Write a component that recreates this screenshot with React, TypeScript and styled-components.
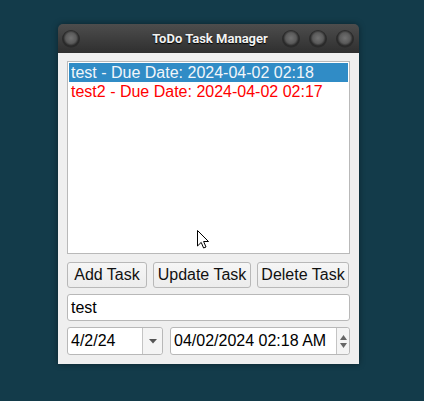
import React from "react";
import styled, { createGlobalStyle } from "styled-components";

const Global = createGlobalStyle`
  html, body { margin: 0; padding: 0; }
  body { background: #133b4a; font-family: "Liberation Sans", Arial, sans-serif; }
`;

const Page = styled.div`
  width: 424px;
  height: 401px;
  position: relative;
  padding: 24px 0 0 58px;
  box-sizing: border-box;
`;

const Window = styled.div`
  width: 301px;
  height: 340px;
  display: flex;
  flex-direction: column;
  border-radius: 5px 5px 0 0;
  overflow: hidden;
  box-shadow: 0 0 6px rgba(0,0,0,0.4);
`;

const TitleBar = styled.div`
  height: 29px;
  flex: none;
  background: linear-gradient(#4d4d4d, #2f2f2f);
  display: flex;
  align-items: center;
  padding: 0 5px 0 4px;
  gap: 9px;
`;

const Knob = styled.div`
  width: 18px;
  height: 18px;
  border-radius: 50%;
  background: radial-gradient(circle at 50% 45%, #727272 0, #5a5a5a 40%, #2a2a2a 58%, #2a2a2a 66%, #4a4a4a 100%);
  flex: none;
`;

const Title = styled.div`
  flex: 1;
  text-align: center;
  color: #f2f2f2;
  font-family: Roboto, "DejaVu Sans", sans-serif;
  font-weight: bold;
  font-size: 13px;
  text-shadow: 0 1px 1px #000;
  padding-left: 58px;
`;

const Body = styled.div`
  flex: 1;
  background: #efefef;
  padding: 8px 9px 0 9px;
  display: flex;
  flex-direction: column;
`;

const List = styled.div`
  background: #fff;
  border: 1px solid #b9b9b9;
  padding: 1px;
  box-sizing: border-box;
  height: 193px;
`;

const Item = styled.div<{ $sel?: boolean; $red?: boolean }>`
  height: 19px;
  line-height: 19px;
  padding-left: 2px;
  font-size: 16px;
  color: ${p => (p.$sel ? "#f2f6fa" : p.$red ? "#ff0000" : "#000")};
  background: ${p => (p.$sel ? "#308cc6" : "transparent")};
  white-space: nowrap;
`;

const Buttons = styled.div`
  display: flex;
  gap: 6px;
  margin-top: 8px;
`;

const Button = styled.div<{ $w: number }>`
  width: ${p => p.$w}px;
  height: 26px;
  box-sizing: border-box;
  border: 1px solid #b8b8b8;
  border-radius: 3px;
  background: linear-gradient(#f6f6f6, #ececec);
  font-size: 16px;
  display: flex;
  align-items: center;
  justify-content: center;
  color: #111;
`;

const Input = styled.div`
  margin-top: 6px;
  height: 27px;
  box-sizing: border-box;
  border: 1px solid #b8b8b8;
  border-radius: 3px;
  background: #fff;
  font-size: 16px;
  display: flex;
  align-items: center;
  padding-left: 3px;
  color: #000;
`;

const Row = styled.div`
  display: flex;
  gap: 7px;
  margin-top: 6px;
`;

const Combo = styled.div`
  width: 96px;
  height: 28px;
  box-sizing: border-box;
  border: 1px solid #b8b8b8;
  border-radius: 3px;
  background: #fff;
  display: flex;
  font-size: 16px;
`;

const ComboText = styled.div`
  flex: 1;
  display: flex;
  align-items: center;
  padding-left: 3px;
`;

const ComboArrow = styled.div`
  width: 19px;
  border-left: 1px solid #c4c4c4;
  background: #f4f4f4;
  display: flex;
  align-items: center;
  justify-content: center;
  border-radius: 0 3px 3px 0;
`;

const Spin = styled.div`
  flex: 1;
  height: 28px;
  box-sizing: border-box;
  border: 1px solid #b8b8b8;
  border-radius: 3px;
  background: #fff;
  display: flex;
  font-size: 16px;
`;

const SpinText = styled.div`
  flex: 1;
  display: flex;
  align-items: center;
  padding-left: 3px;
  border-right: 1px solid #c4c4c4;
`;

const SpinButtons = styled.div`
  width: 12px;
  background: #f4f4f4;
  display: flex;
  flex-direction: column;
  align-items: center;
  justify-content: center;
  gap: 3px;
  border-radius: 0 3px 3px 0;
`;

const Cursor = styled.svg`
  position: absolute;
  left: 197px;
  top: 230px;
`;

export default function App() {
  return (
    <>
      <Global />
      <Page>
        <Window>
          <TitleBar>
            <Knob />
            <Title>ToDo Task Manager</Title>
            <Knob />
            <Knob />
            <Knob />
          </TitleBar>
          <Body>
            <List>
              <Item $sel>test - Due Date: 2024-04-02 02:18</Item>
              <Item $red>test2 - Due Date: 2024-04-02 02:17</Item>
            </List>
            <Buttons>
              <Button $w={80}>Add Task</Button>
              <Button $w={98}>Update Task</Button>
              <Button $w={92}>Delete Task</Button>
            </Buttons>
            <Input>test</Input>
            <Row>
              <Combo>
                <ComboText>4/2/24</ComboText>
                <ComboArrow>
                  <svg width="8" height="5" viewBox="0 0 8 5"><path d="M0 0H8L4 4.5Z" fill="#555" /></svg>
                </ComboArrow>
              </Combo>
              <Spin>
                <SpinText>04/02/2024 02:18 AM</SpinText>
                <SpinButtons>
                  <svg width="7" height="5" viewBox="0 0 7 5"><path d="M0 5H7L3.5 0Z" fill="#666" /></svg>
                  <svg width="7" height="5" viewBox="0 0 7 5"><path d="M0 0H7L3.5 5Z" fill="#666" /></svg>
                </SpinButtons>
              </Spin>
            </Row>
          </Body>
        </Window>
        <Cursor width="12" height="19" viewBox="0 0 12 19">
          <path d="M0.5 0.5V16L4.2 12.4L6.6 18L9 17L6.6 11.5H11.5Z" fill="#fff" stroke="#000" strokeWidth="1" strokeLinejoin="miter" />
        </Cursor>
      </Page>
    </>
  );
}
